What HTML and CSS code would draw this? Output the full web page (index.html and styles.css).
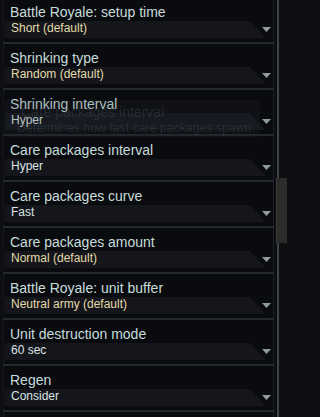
FILE: index.html
```html
<!DOCTYPE html>
<html>
<head>
<meta charset="utf-8">
<link rel="stylesheet" href="styles.css">
</head>
<body>
<div class="frame">
  <div class="list">
    <div class="opt">
      <div class="panel">
        <div class="title">Battle Royale: setup time</div>
        <div class="value"><span class="txt def">Short (default)</span><svg class="arrow" width="9" height="5" viewBox="0 0 9 5"><path d="M0 0H9L4.5 5Z"/></svg></div>
      </div>
      <div class="sep"></div>
    </div>
    <div class="opt">
      <div class="panel">
        <div class="title">Shrinking type</div>
        <div class="value"><span class="txt def">Random (default)</span><svg class="arrow" width="9" height="5" viewBox="0 0 9 5"><path d="M0 0H9L4.5 5Z"/></svg></div>
      </div>
      <div class="sep"></div>
    </div>
    <div class="opt">
      <div class="panel">
        <div class="title">Shrinking interval</div>
        <div class="value"><span class="txt">Hyper</span><svg class="arrow" width="9" height="5" viewBox="0 0 9 5"><path d="M0 0H9L4.5 5Z"/></svg></div>
      </div>
      <div class="sep"></div>
    </div>
    <div class="opt">
      <div class="panel">
        <div class="title">Care packages interval</div>
        <div class="value"><span class="txt">Hyper</span><svg class="arrow" width="9" height="5" viewBox="0 0 9 5"><path d="M0 0H9L4.5 5Z"/></svg></div>
      </div>
      <div class="sep"></div>
    </div>
    <div class="opt">
      <div class="panel">
        <div class="title">Care packages curve</div>
        <div class="value"><span class="txt">Fast</span><svg class="arrow" width="9" height="5" viewBox="0 0 9 5"><path d="M0 0H9L4.5 5Z"/></svg></div>
      </div>
      <div class="sep"></div>
    </div>
    <div class="opt">
      <div class="panel">
        <div class="title">Care packages amount</div>
        <div class="value"><span class="txt def">Normal (default)</span><svg class="arrow" width="9" height="5" viewBox="0 0 9 5"><path d="M0 0H9L4.5 5Z"/></svg></div>
      </div>
      <div class="sep"></div>
    </div>
    <div class="opt">
      <div class="panel">
        <div class="title">Battle Royale: unit buffer</div>
        <div class="value"><span class="txt def">Neutral army (default)</span><svg class="arrow" width="9" height="5" viewBox="0 0 9 5"><path d="M0 0H9L4.5 5Z"/></svg></div>
      </div>
      <div class="sep"></div>
    </div>
    <div class="opt">
      <div class="panel">
        <div class="title">Unit destruction mode</div>
        <div class="value"><span class="txt">60 sec</span><svg class="arrow" width="9" height="5" viewBox="0 0 9 5"><path d="M0 0H9L4.5 5Z"/></svg></div>
      </div>
      <div class="sep"></div>
    </div>
    <div class="opt">
      <div class="panel">
        <div class="title">Regen</div>
        <div class="value"><span class="txt">Consider</span><svg class="arrow" width="9" height="5" viewBox="0 0 9 5"><path d="M0 0H9L4.5 5Z"/></svg></div>
      </div>
      <div class="sep"></div>
    </div>
    <div class="opt">
      <div class="panel"></div>
    </div>
  </div>
  <div class="scrollbar">
    <div class="track"></div>
    <div class="thumb"></div>
  </div>
  <div class="tooltip">
    <div class="tt-title">Care packages interval</div>
    <div class="tt-desc">Determines how fast care packages spawn.</div>
  </div>
</div>
</body>
</html>
```
FILE: styles.css
```css
html, body {
  margin: 0;
  padding: 0;
}
body {
  background: #0d0e11;
  width: 287px;
  height: 417px;
  overflow: hidden;
  font-family: "Liberation Sans", Arial, sans-serif;
}
.frame {
  position: relative;
  display: flex;
  height: 417px;
  overflow: hidden;
}
.list {
  width: 271px;
  padding-left: 3px;
  margin-top: -2px;
  display: flex;
  flex-direction: column;
  flex: none;
}
.opt {
  display: flex;
  flex-direction: column;
  flex: none;
}
.panel {
  box-sizing: border-box;
  height: 44px;
  background: #0a0b0e;
  border-left: 1px solid #14161a;
  border-right: 1px solid #1c1f24;
  padding-top: 6px;
  display: flex;
  flex-direction: column;
}
.sep {
  height: 2px;
  background: #24272c;
}
.title {
  height: 16px;
  line-height: 16px;
  font-size: 14px;
  color: #c6dcdc;
  padding-left: 6px;
  white-space: nowrap;
}
.value {
  position: relative;
  margin-top: 1px;
  margin-left: 1px;
  height: 17px;
  display: flex;
  align-items: center;
  justify-content: space-between;
  padding-right: 2px;
}
.value::before {
  content: "";
  position: absolute;
  left: 0;
  top: 0;
  width: 261px;
  height: 17px;
  background: #14161c;
  clip-path: polygon(0 0, 245px 0, 261px 100%, 0 100%);
}
.txt {
  position: relative;
  font-size: 12px;
  line-height: 15px;
  padding-left: 6px;
  margin-top: -2px;
  color: #dbe4e4;
  white-space: nowrap;
}
.txt.def {
  color: #e2daa8;
}
.arrow {
  position: relative;
  fill: #8e9a9c;
  margin-top: -1px;
}
.scrollbar {
  position: relative;
  width: 13px;
  flex: none;
  display: flex;
}
.track {
  margin-left: 3px;
  width: 2px;
  background: #3f4247;
}
.thumb {
  position: absolute;
  left: 2px;
  top: 178px;
  width: 10px;
  height: 65px;
  background: #2c2c2a;
  border-left: 1px solid #3a3a38;
}
.tooltip {
  position: absolute;
  left: 5px;
  top: 100px;
  width: 255px;
  height: 37px;
  box-sizing: border-box;
  padding-top: 4px;
  background: rgba(40, 46, 56, 0.18);
  white-space: nowrap;
}
.tt-title {
  font-size: 14px;
  line-height: 16px;
  padding-left: 16px;
  color: rgba(190, 215, 220, 0.13);
}
.tt-desc {
  margin-top: 1px;
  font-size: 12.3px;
  line-height: 15px;
  padding-left: 12px;
  color: rgba(190, 215, 220, 0.13);
}
```
